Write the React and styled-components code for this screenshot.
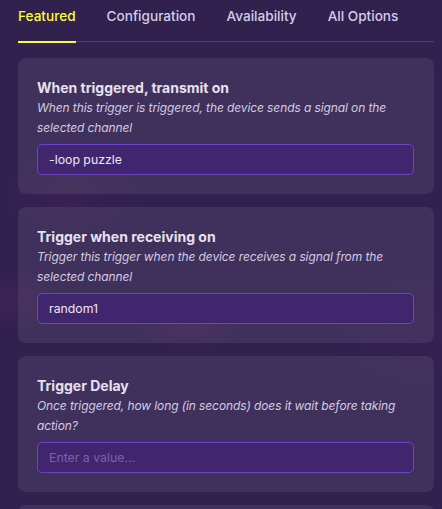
import React from "react";
import styled, { createGlobalStyle } from "styled-components";

const Global = createGlobalStyle`
  html, body {
    margin: 0;
    padding: 0;
    height: 100%;
  }
  body {
    background: #30214f;
    font-family: Inter, "Noto Sans", sans-serif;
    -webkit-font-smoothing: antialiased;
  }
`;

const Page = styled.div`
  width: 442px;
  height: 509px;
  overflow: hidden;
  padding: 0 8px 0 18px;
  box-sizing: border-box;
  background:
    radial-gradient(ellipse 50px 35px at 10px 300px, rgba(110, 45, 105, 0.22), transparent),
    radial-gradient(ellipse 60px 35px at 190px 320px, rgba(110, 45, 100, 0.2), transparent),
    radial-gradient(ellipse 80px 50px at 70px 190px, rgba(100, 40, 100, 0.18), transparent),
    radial-gradient(ellipse 110px 70px at 430px 330px, rgba(80, 35, 100, 0.2), transparent),
    #30214f;
`;

const Tabs = styled.div`
  display: flex;
  gap: 31px;
  border-bottom: 1px solid #4e3a9a;
  height: 42px;
  box-sizing: border-box;
`;

const Tab = styled.div`
  position: relative;
  font-size: 13.6px;
  font-weight: 500;
  line-height: 32px;
  color: ${(p) => (p.$active ? "#ffff1a" : "#d4cde6")};
  &::after {
    content: "";
    display: ${(p) => (p.$active ? "block" : "none")};
    position: absolute;
    left: 0;
    right: 0;
    bottom: -2px;
    height: 2px;
    background: #ffff1a;
  }
`;

const List = styled.div`
  display: flex;
  flex-direction: column;
  gap: 13px;
  padding-top: 16px;
`;

const Card = styled.div`
  background: rgba(255, 255, 255, 0.075);
  border-radius: 8px;
  padding: 20px 20px 19px 19px;
  min-height: ${(p) => p.$minHeight || 0}px;
  display: flex;
  flex-direction: column;
`;

const Title = styled.div`
  font-size: 14px;
  font-weight: 700;
  line-height: 20px;
  color: #e6e1ef;
`;

const Desc = styled.div`
  font-size: 12px;
  letter-spacing: -0.1px;
  font-style: italic;
  line-height: 20px;
  min-height: 40px;
  color: #d3cce1;
  margin-bottom: 6px;
`;

const Field = styled.input`
  box-sizing: border-box;
  height: 31px;
  width: 100%;
  background: #41266f;
  border: 1px solid #6b44c7;
  border-radius: 5px;
  padding: 0 11px;
  font-family: Inter, "Noto Sans", sans-serif;
  font-size: 12.3px;
  color: #ebe6f5;
  outline: none;
  &::placeholder {
    color: #7a61a6;
  }
`;

const options = [
  {
    title: "When triggered, transmit on",
    desc: "When this trigger is triggered, the device sends a signal on the selected channel",
    value: "-loop puzzle",
  },
  {
    title: "Trigger when receiving on",
    desc: "Trigger this trigger when the device receives a signal from the selected channel",
    value: "random1",
  },
  {
    title: "Trigger Delay",
    desc: "Once triggered, how long (in seconds) does it wait before taking action?",
    value: "",
  },
];

export default function App() {
  return (
    <Page>
      <Global />
      <Tabs>
        <Tab $active>Featured</Tab>
        <Tab>Configuration</Tab>
        <Tab>Availability</Tab>
        <Tab>All Options</Tab>
      </Tabs>
      <List>
        {options.map((o, i) => (
          <Card key={i}>
            <Title>{o.title}</Title>
            <Desc>{o.desc}</Desc>
            <Field defaultValue={o.value} placeholder="Enter a value..." />
          </Card>
        ))}
        {/* next card, scrolled below the fold */}
        <Card $minHeight={80} />
      </List>
    </Page>
  );
}
